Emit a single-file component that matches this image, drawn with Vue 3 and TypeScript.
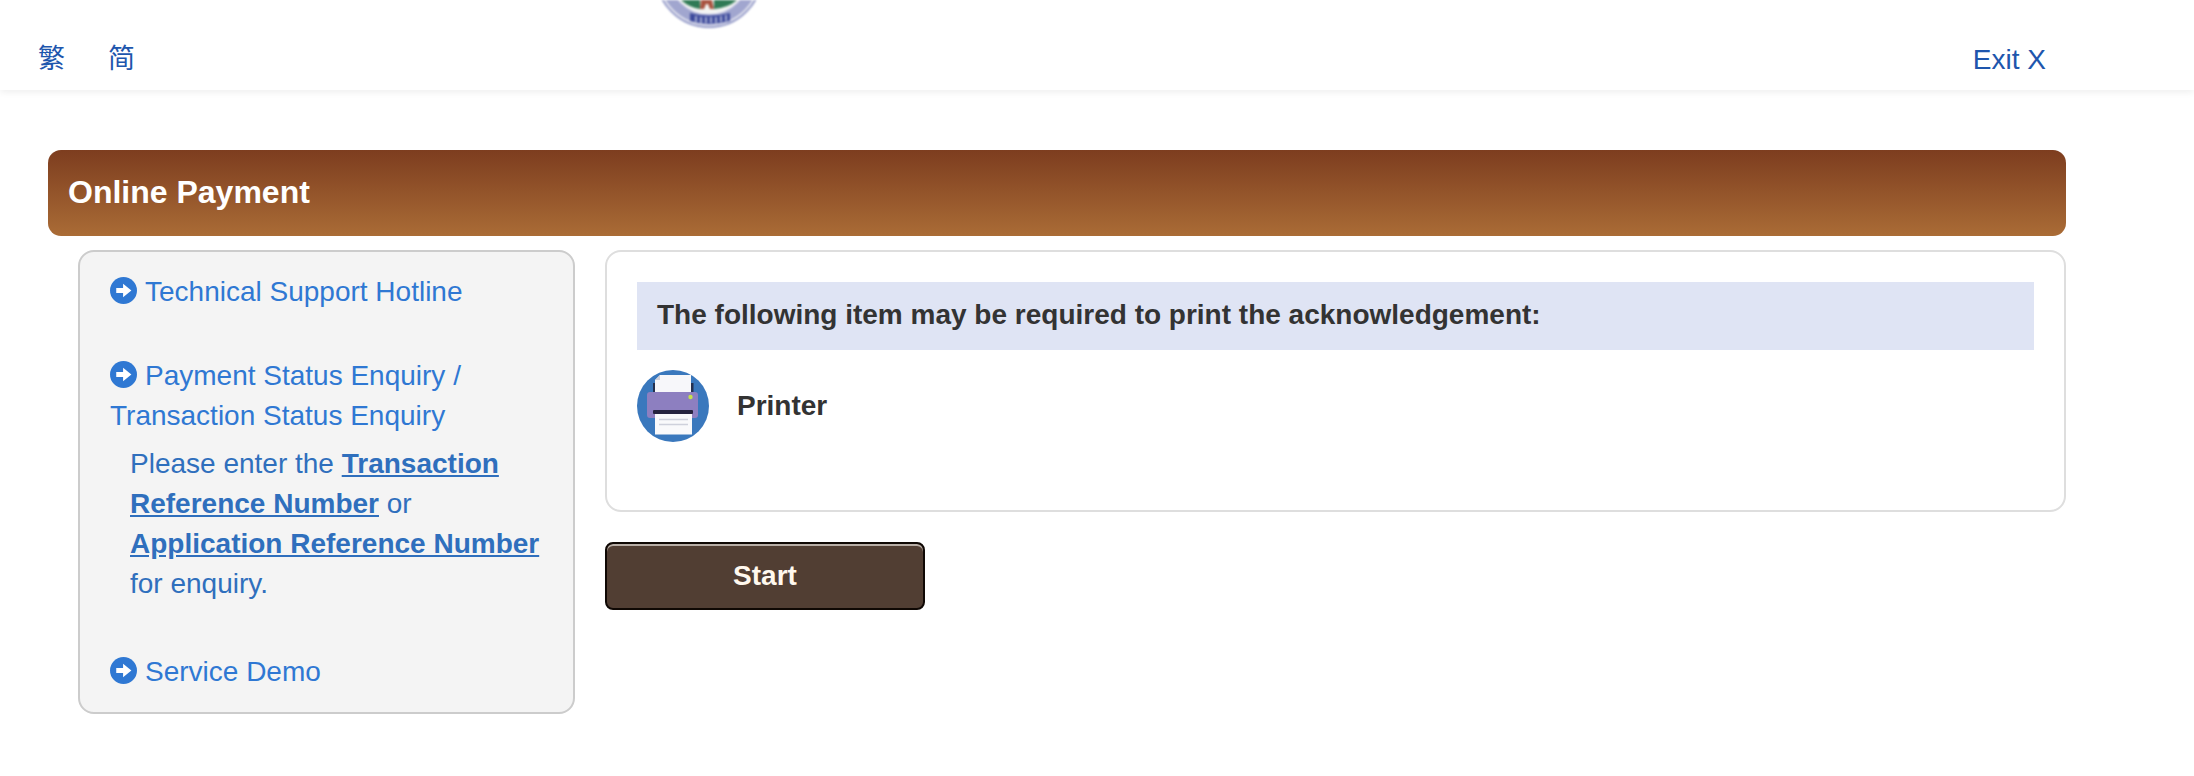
<script setup lang="ts">
const langs: string[] = ['繁', '简']
</script>

<template>
  <div class="page">
    <header class="topbar">
      <svg class="crest" width="110" height="30" viewBox="0 0 110 30" aria-hidden="true">
        <circle cx="55" cy="-26" r="53" fill="#f1f1f6" stroke="#6f78b6" stroke-width="1.400" />
        <circle cx="55" cy="-26" r="45.500" fill="none" stroke="#8d93c6" stroke-width="10" opacity="0.8" />
        <circle cx="55" cy="-26" r="39" fill="#f4f5f2" />
        <path d="M27 0 Q36 8 46 9 L46 0 Z M83 0 Q74 8 60 9 L60 0 Z" fill="#2f7a55" />
        <path d="M47 0 L46 9 L50 9 L52 4 L54 4 L56 9 L60 9 L58 0 Z" fill="#a8533f" />
        <path d="M36 13 Q55 18 76 13 L76 21 Q55 27 36 21 Z" fill="#3d4a9c" />
        <path d="M42 16v6M47 17v6M52 17v6M57 17v6M62 17v6M67 16v6M72 15v6" stroke="#dfe2f0" stroke-width="1.300" />
      </svg>
      <nav class="langs">
        <a v-for="lang in langs" :key="lang" class="top-link cjk">{{ lang }}</a>
      </nav>
      <a class="top-link exit">Exit X</a>
    </header>

    <main class="content">
      <h1 class="title">Online Payment</h1>
      <div class="columns">
        <aside class="side">
          <div class="side-item">
            <svg class="arrow" viewBox="0 0 26 26" aria-hidden="true">
              <circle cx="13" cy="13" r="13" fill="#2f78d3" />
              <path d="M6 10.6h6.6V6.4L20.6 13l-8 6.6v-4.2H6z" fill="#fff" />
            </svg>
            <a class="side-link">Technical Support Hotline</a>
          </div>
          <div class="side-item">
            <svg class="arrow" viewBox="0 0 26 26" aria-hidden="true">
              <circle cx="13" cy="13" r="13" fill="#2f78d3" />
              <path d="M6 10.6h6.6V6.4L20.6 13l-8 6.6v-4.2H6z" fill="#fff" />
            </svg>
            <a class="side-link">Payment Status Enquiry / Transaction Status Enquiry</a>
            <p class="side-note">
              Please enter the <a class="strong-link">Transaction</a><br />
              <a class="strong-link">Reference Number</a> or<br />
              <a class="strong-link">Application Reference Number</a><br />
              for enquiry.
            </p>
          </div>
          <div class="side-item last">
            <svg class="arrow" viewBox="0 0 26 26" aria-hidden="true">
              <circle cx="13" cy="13" r="13" fill="#2f78d3" />
              <path d="M6 10.6h6.6V6.4L20.6 13l-8 6.6v-4.2H6z" fill="#fff" />
            </svg>
            <a class="side-link">Service Demo</a>
          </div>
        </aside>

        <section class="main-col">
          <div class="card">
            <div class="banner">The following item may be required to print the acknowledgement:</div>
            <div class="req">
              <svg class="printer" viewBox="0 0 72 72" aria-hidden="true">
                <circle cx="36" cy="36" r="36" fill="#3a78bd" />
                <rect x="16" y="13" width="2.500" height="10" fill="#24304f" />
                <rect x="54" y="13" width="2.500" height="10" fill="#24304f" />
                <path d="M23 5H54V23H18V10Z" fill="#f7f7fa" />
                <path d="M23 5V10H18Z" fill="#cfd0da" />
                <rect x="10" y="22" width="51" height="26" rx="3" fill="#8d7fc0" />
                <circle cx="53.500" cy="27" r="2.200" fill="#c4e24c" />
                <rect x="16" y="40" width="40" height="4" rx="1" fill="#25233f" />
                <rect x="18" y="44" width="37" height="20.500" fill="#f9f9fb" />
                <path d="M22 49.500h29M22 54.500h29" stroke="#cfd1dc" stroke-width="1.500" />
              </svg>
              <span class="req-label">Printer</span>
            </div>
          </div>
          <button class="start" type="button">Start</button>
        </section>
      </div>
    </main>
  </div>
</template>

<style scoped>
.page {
  width: 2194px;
  height: 776px;
  overflow: hidden;
  background: #fff;
  font-family: "Liberation Sans", Arial, "Noto Sans CJK SC", sans-serif;
}
.topbar {
  position: relative;
  height: 90px;
  box-sizing: border-box;
  padding: 40px 148px 0 38px;
  display: flex;
  justify-content: space-between;
  align-items: flex-start;
  box-shadow: 0 2px 7px rgba(0, 0, 0, 0.07);
}
.crest {
  position: absolute;
  left: 654px;
  top: 0;
  filter: blur(0.8px);
}
.langs {
  display: flex;
  gap: 43px;
}
.top-link {
  font-size: 28px;
  line-height: 39px;
  color: #1e56ad;
}
.top-link.cjk {
  font-size: 27px;
}
.content {
  padding: 60px 128px 0 48px;
}
.title {
  margin: 0;
  height: 86px;
  box-sizing: border-box;
  padding-left: 20px;
  font-size: 32px;
  font-weight: 700;
  line-height: 84px;
  color: #fff;
  border-radius: 13px;
  background: linear-gradient(#7d3d1f, #aa6c36);
}
.columns {
  margin-top: 14px;
  padding-left: 30px;
  display: flex;
  gap: 30px;
  align-items: flex-start;
}
.side {
  width: 497px;
  height: 464px;
  box-sizing: border-box;
  padding: 20px 20px 0 30px;
  flex: none;
  background: #f4f4f4;
  border: 2px solid #cccccc;
  border-radius: 16px;
  font-size: 28px;
  line-height: 40px;
  color: #2f78d3;
}
.side-item {
  margin-bottom: 44px;
}
.side-item.last {
  margin-bottom: 0;
}
.arrow {
  width: 27px;
  height: 27px;
  vertical-align: -3px;
}
.side-link {
  margin-left: 8px;
}
.side-note {
  margin: 8px 0 48px 20px;
  color: #2f6fbd;
}
.strong-link {
  font-weight: 700;
  text-decoration: underline;
}
.main-col {
  flex: 1;
  min-width: 0;
}
.card {
  height: 262px;
  box-sizing: border-box;
  padding: 30px 30px 0;
  background: #fff;
  border: 2px solid #dedede;
  border-radius: 16px;
}
.banner {
  height: 68px;
  box-sizing: border-box;
  padding-left: 20px;
  font-size: 28px;
  font-weight: 700;
  line-height: 66px;
  color: #333;
  background: #dfe4f4;
}
.req {
  margin-top: 20px;
  display: flex;
  align-items: center;
  gap: 28px;
}
.printer {
  width: 72px;
  height: 72px;
  flex: none;
  filter: blur(0.5px);
}
.req-label {
  font-size: 28px;
  font-weight: 700;
  color: #333;
}
.start {
  display: block;
  margin-top: 30px;
  width: 320px;
  height: 68px;
  padding: 0;
  font-family: inherit;
  font-size: 28px;
  font-weight: 700;
  color: #fff8ee;
  background: #513e33;
  border: 2px solid #0f0804;
  border-radius: 8px;
  box-shadow: inset 0 2px 0 #b8aea6;
}
</style>
